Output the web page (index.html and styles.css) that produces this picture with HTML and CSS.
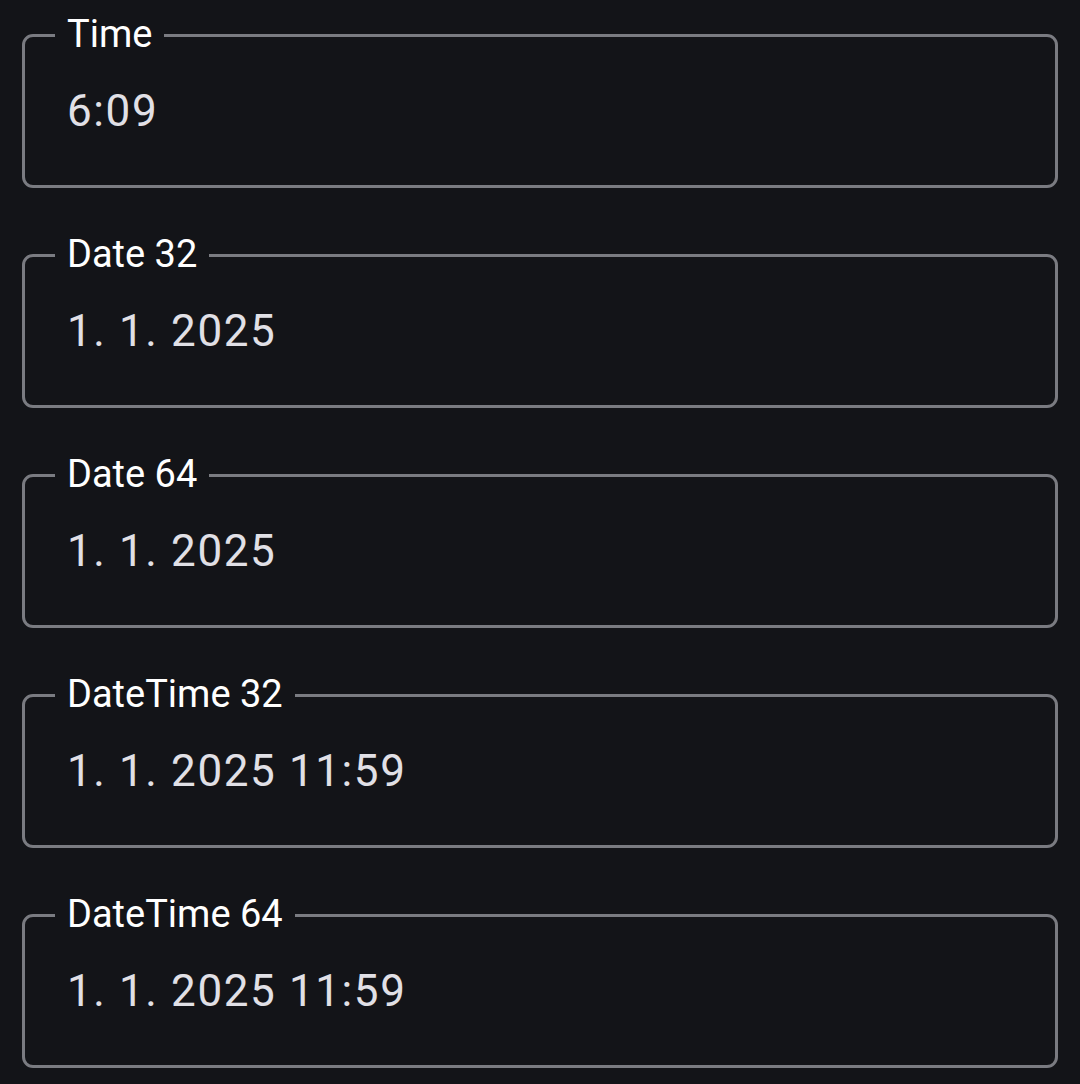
FILE: index.html
```html
<!DOCTYPE html>
<html lang="en">
<head>
<meta charset="utf-8">
<title>Fields</title>
<link rel="stylesheet" href="styles.css">
</head>
<body>
<main class="list">
  <fieldset class="field">
    <legend class="field-label">Time</legend>
    <div class="field-value">6:09</div>
  </fieldset>
  <fieldset class="field">
    <legend class="field-label">Date 32</legend>
    <div class="field-value">1. 1. 2025</div>
  </fieldset>
  <fieldset class="field">
    <legend class="field-label">Date 64</legend>
    <div class="field-value">1. 1. 2025</div>
  </fieldset>
  <fieldset class="field">
    <legend class="field-label">DateTime 32</legend>
    <div class="field-value">1. 1. 2025 11:59</div>
  </fieldset>
  <fieldset class="field">
    <legend class="field-label">DateTime 64</legend>
    <div class="field-value">1. 1. 2025 11:59</div>
  </fieldset>
</main>
</body>
</html>
```

FILE: styles.css
```css
html, body {
  margin: 0;
  padding: 0;
  background: #131418;
  height: 100%;
}

body {
  font-family: Roboto, "Noto Sans", sans-serif;
  overflow: hidden;
}

.list {
  display: flex;
  flex-direction: column;
  gap: 44px;
  padding: 12px 22px 0;
}

.field {
  margin: 0;
  padding: 26px 0 48px 30px;
  border: 3px solid #7a7b81;
  border-radius: 11px;
  min-width: 0;
}

.field-label {
  padding: 0 12px 3px;
  font-size: 38px;
  line-height: 44px;
  letter-spacing: 0;
  color: #ffffff;
}

.field-value {
  padding-left: 12px;
  font-size: 44px;
  line-height: 52px;
  letter-spacing: 1.6px;
  color: #e1e0e6;
}
```
